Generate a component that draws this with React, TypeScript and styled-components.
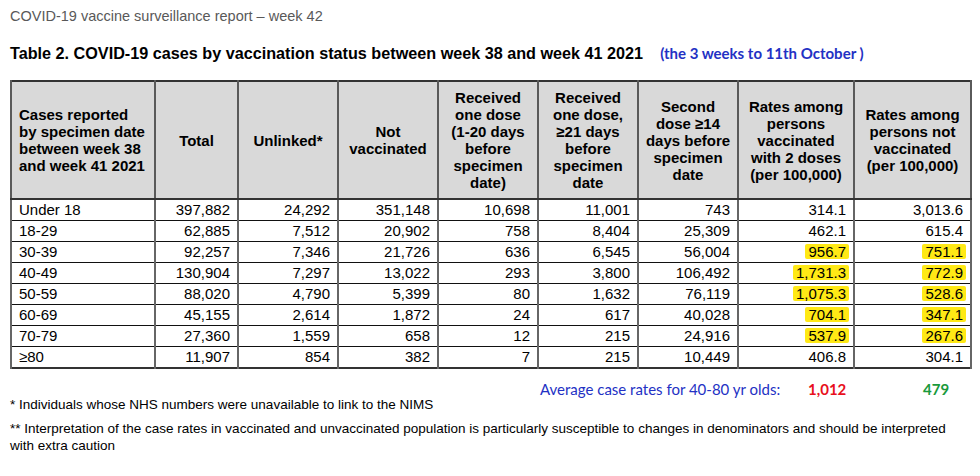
import styled, { createGlobalStyle } from "styled-components";

const GlobalStyle = createGlobalStyle`
  html, body {
    margin: 0;
    padding: 0;
    background: #fff;
  }
  body {
    font-family: "Liberation Sans", Arial, sans-serif;
    color: #000;
  }
`;

const Page = styled.div`
  width: 980px;
  height: 476px;
  padding: 6px 10px 0;
  box-sizing: border-box;
  overflow: hidden;
`;

const ReportName = styled.div`
  font-size: 14.5px;
  line-height: 20px;
  color: #595959;
`;

const TitleRow = styled.div`
  display: flex;
  align-items: baseline;
  margin-top: 16px;
  line-height: 22px;
`;

const Title = styled.h2`
  margin: 0;
  font-size: 16.2px;
  font-weight: 700;
`;

const TitleNote = styled.span`
  margin-left: 17px;
  font-family: Lato, "Open Sans", sans-serif;
  font-size: 15px;
  font-weight: 700;
  color: #2331c4;
`;

const Table = styled.table`
  margin-top: 16px;
  width: 960px;
  table-layout: fixed;
  border-collapse: collapse;
  border: 2px solid #333;
  font-size: 15px;
`;

const HeadCell = styled.th<{ $left?: boolean }>`
  height: 116px;
  padding: 0 ${(p) => (p.$left ? "0 0 7px" : "2px")};
  background: #d9d9d9;
  border-left: 2px solid #5a5a5a;
  border-right: 2px solid #5a5a5a;
  border-bottom: 2px solid #333;
  font-weight: 700;
  line-height: 17px;
  text-align: ${(p) => (p.$left ? "left" : "center")};
  vertical-align: middle;
`;

const Cell = styled.td<{ $left?: boolean }>`
  height: 20px;
  padding: ${(p) => (p.$left ? "0 0 0 7px" : "0 7px 0 0")};
  border-left: 2px solid #666;
  border-right: 2px solid #666;
  border-top: 1px solid #111;
  line-height: 20px;
  text-align: ${(p) => (p.$left ? "left" : "right")};
  white-space: nowrap;
`;

const Marker = styled.span`
  display: inline-block;
  margin-right: -3px;
  padding: 0 3px;
  line-height: 15px;
  background: #ffe915;
  border-radius: 2px;
`;

const Averages = styled.div`
  display: grid;
  grid-template-columns: 530px 268px 115px auto;
  margin-top: 13px;
  height: 14px;
  line-height: 14px;
  font-family: Lato, "Open Sans", sans-serif;
  font-size: 15px;
`;

const AverageLabel = styled.span`
  grid-column: 2;
  color: #2331c4;
`;

const AverageValue = styled.span<{ $color: string }>`
  color: ${(p) => p.$color};
  font-weight: 700;
`;

const Footnote = styled.p<{ $gap: number }>`
  margin: ${(p) => p.$gap}px 0 0;
  font-size: 13.5px;
  line-height: 17px;
`;

const columns = [144, 83, 100, 100, 100, 100, 100, 116, 117];

const headings: string[][] = [
  ["Cases reported", "by specimen date", "between week 38", "and week 41 2021"],
  ["Total"],
  ["Unlinked*"],
  ["Not", "vaccinated"],
  ["Received", "one dose", "(1-20 days", "before", "specimen", "date)"],
  ["Received", "one dose,", "≥21 days", "before", "specimen", "date"],
  ["Second", "dose ≥14", "days before", "specimen", "date"],
  ["Rates among", "persons", "vaccinated", "with 2 doses", "(per 100,000)"],
  ["Rates among", "persons not", "vaccinated", "(per 100,000)"],
];

type Row = { age: string; values: string[]; marked?: boolean };

const rows: Row[] = [
  { age: "Under 18", values: ["397,882", "24,292", "351,148", "10,698", "11,001", "743", "314.1", "3,013.6"] },
  { age: "18-29", values: ["62,885", "7,512", "20,902", "758", "8,404", "25,309", "462.1", "615.4"] },
  { age: "30-39", values: ["92,257", "7,346", "21,726", "636", "6,545", "56,004", "956.7", "751.1"], marked: true },
  { age: "40-49", values: ["130,904", "7,297", "13,022", "293", "3,800", "106,492", "1,731.3", "772.9"], marked: true },
  { age: "50-59", values: ["88,020", "4,790", "5,399", "80", "1,632", "76,119", "1,075.3", "528.6"], marked: true },
  { age: "60-69", values: ["45,155", "2,614", "1,872", "24", "617", "40,028", "704.1", "347.1"], marked: true },
  { age: "70-79", values: ["27,360", "1,559", "658", "12", "215", "24,916", "537.9", "267.6"], marked: true },
  { age: "≥80", values: ["11,907", "854", "382", "7", "215", "10,449", "406.8", "304.1"] },
];

const App = () => {
  return (
    <Page>
      <GlobalStyle />
      <ReportName>COVID-19 vaccine surveillance report – week 42</ReportName>
      <TitleRow>
        <Title>
          Table 2. COVID-19 cases by vaccination status between week 38 and
          week 41 2021
        </Title>
        <TitleNote>(the 3 weeks to 11th October )</TitleNote>
      </TitleRow>
      <Table>
        <colgroup>
          {columns.map((w, i) => (
            <col key={i} style={{ width: w }} />
          ))}
        </colgroup>
        <thead>
          <tr>
            {headings.map((lines, i) => (
              <HeadCell key={i} $left={i === 0}>
                {lines.map((line, j) => (
                  <span key={j}>
                    {j > 0 && <br />}
                    {line}
                  </span>
                ))}
              </HeadCell>
            ))}
          </tr>
        </thead>
        <tbody>
          {rows.map((row) => (
            <tr key={row.age}>
              <Cell $left>{row.age}</Cell>
              {row.values.map((v, i) => (
                <Cell key={i}>
                  {row.marked && i >= 6 ? <Marker>{v}</Marker> : v}
                </Cell>
              ))}
            </tr>
          ))}
        </tbody>
      </Table>
      <Averages>
        <AverageLabel>Average case rates for 40-80 yr olds:</AverageLabel>
        <AverageValue $color="#e8101c">1,012</AverageValue>
        <AverageValue $color="#1a9a3c">479</AverageValue>
      </Averages>
      <Footnote $gap={0}>
        * Individuals whose NHS numbers were unavailable to link to the NIMS
      </Footnote>
      <Footnote $gap={7}>
        ** Interpretation of the case rates in vaccinated and unvaccinated
        population is particularly susceptible to changes in denominators and
        should be interpreted
        <br />
        with extra caution
      </Footnote>
    </Page>
  );
};

export default App;
